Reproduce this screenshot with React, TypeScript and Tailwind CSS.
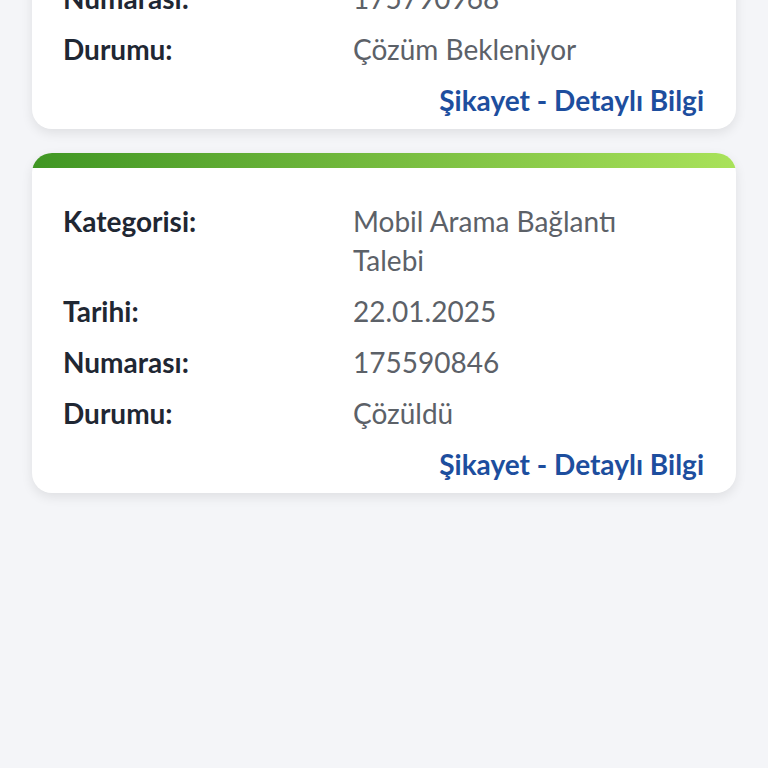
const complaints = [
  {
    category: 'Mobil Arama Bağlantı Talebi',
    date: '20.01.2025',
    number: '175790968',
    status: 'Çözüm Bekleniyor',
  },
  {
    category: 'Mobil Arama Bağlantı Talebi',
    date: '22.01.2025',
    number: '175590846',
    status: 'Çözüldü',
  },
]

function Row({ label, value }: { label: string; value: string }) {
  return (
    <div className="flex">
      <div className="w-[290px] shrink-0 font-bold text-[#1f2733]">{label}</div>
      <div className="flex-1 pr-10 text-[#5c6168]">{value}</div>
    </div>
  )
}

function ComplaintCard({ c }: { c: (typeof complaints)[number] }) {
  return (
    <div className="rounded-[20px] bg-white overflow-hidden shadow-[0_4px_12px_rgba(0,0,0,0.09)]">
      <div className="h-[15px] bg-gradient-to-r from-[#3f9623] to-[#a9e25a]" />
      <div className="flex flex-col gap-3 pl-[31px] pr-8 pt-[34px] pb-[9px]">
        <Row label="Kategorisi:" value={c.category} />
        <Row label="Tarihi:" value={c.date} />
        <Row label="Numarası:" value={c.number} />
        <Row label="Durumu:" value={c.status} />
        <div className="text-right font-bold text-[#1d4e9e]">Şikayet - Detaylı Bilgi</div>
      </div>
    </div>
  )
}

export default function App() {
  return (
    <div
      className="min-h-[768px] h-[768px] overflow-hidden bg-[#f4f5f8] text-[28px] leading-[39px]"
      style={{ fontFamily: 'Lato, "Noto Sans", sans-serif' }}
    >
      {/* page is scrolled: first card starts above the viewport */}
      <div className="mt-[-211px] mx-8 flex flex-col gap-6">
        {complaints.map((c) => (
          <ComplaintCard key={c.number} c={c} />
        ))}
      </div>
    </div>
  )
}
